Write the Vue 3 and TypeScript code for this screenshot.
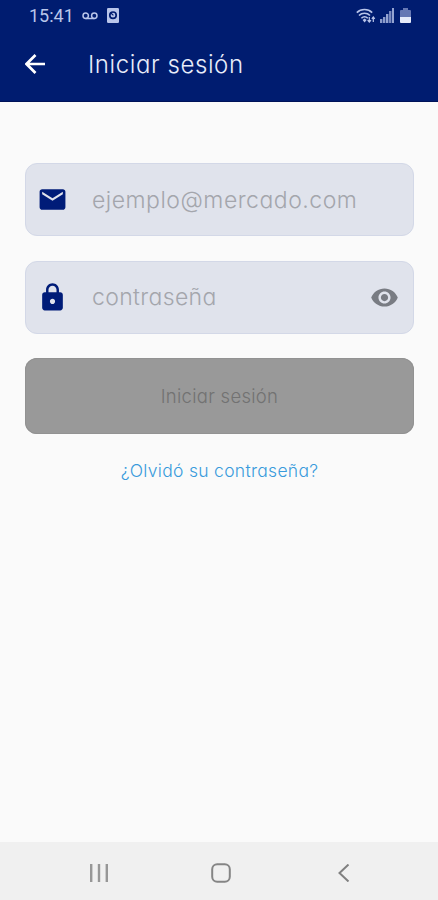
<script setup lang="ts">
import { ref } from 'vue'

const email = ref('')
const password = ref('')
const visible = ref(false)
</script>

<template>
  <div class="screen">
    <header class="top">
      <div class="status">
        <span class="clock">15:41</span>
        <svg class="voicemail" viewBox="0 0 16 8" width="16" height="8">
          <g fill="none" stroke="currentColor" stroke-width="1.5">
            <circle cx="3.7" cy="3.8" r="2.7" />
            <circle cx="12.3" cy="3.8" r="2.7" />
            <path d="M3.7 6.5h8.6" />
          </g>
        </svg>
        <svg class="device" viewBox="0 0 12 15" width="12" height="15">
          <rect width="12" height="15" rx="1.2" fill="currentColor" />
          <circle cx="6" cy="7.2" r="3.2" fill="none" stroke="#001c70" stroke-width="1.7" />
          <path d="M3.600 4.800l2.800 2.600" stroke="#001c70" stroke-width="1.2" fill="none" />
        </svg>
        <span class="spacer"></span>
        <svg class="wifi" viewBox="0 0 20 16" width="20" height="16">
          <g fill="none" stroke="currentColor" stroke-width="1.6">
            <path d="M.8 4.6C5 .5 12 .5 16.200 4.600" />
            <path d="M3 7.500c3-3 8-3 11 0" />
            <path d="M5.400 10.200c2-2 4.400-2 6.400 0" />
          </g>
          <path d="M6.600 12l2-1.500 2 1.500-2 2.500z" fill="currentColor" />
          <path d="M13.300 9v5m-1.700-1.800 1.700 1.900 1.700-1.900M17.300 14V9m-1.500 1.800L17.300 9l1.500 1.800" fill="none" stroke="currentColor" stroke-width="1.200" />
        </svg>
        <svg class="signal" viewBox="0 0 14 15" width="14" height="15">
          <g fill="currentColor">
            <rect x="0" y="11" width="2.400" height="4" opacity=".75" />
            <rect x="3" y="9" width="2.400" height="6" opacity=".75" />
            <rect x="6" y="6" width="2.400" height="9" opacity=".8" />
            <rect x="9" y="3" width="2.400" height="12" opacity=".65" />
            <rect x="12" y="0" width="2" height="15" opacity=".8" />
          </g>
        </svg>
        <svg class="battery" viewBox="0 0 11 15" width="11" height="15">
          <path d="M3 0h5v2h2q1 0 1 1v6H0V3q0-1 1-1h2z" fill="#6678b4" />
          <path d="M0 9h11v5q0 1-1 1H1q-1 0-1-1z" fill="#e6ebfa" />
        </svg>
      </div>
      <div class="bar">
        <button class="back" aria-label="Atrás">
          <svg viewBox="0 0 20 20" width="20" height="20">
            <path d="M20 10H2M10.500 1 1.500 10l9 9" fill="none" stroke="#fff" stroke-width="2.700" />
          </svg>
        </button>
        <h1>Iniciar sesión</h1>
      </div>
    </header>

    <main>
      <label class="field">
        <svg class="lead" viewBox="0 0 24 24" width="31" height="31">
          <path fill="#001c78" d="M20 4H4c-1.100 0-1.990.9-1.990 2L2 18c0 1.100.9 2 2 2h16c1.100 0 2-.9 2-2V6c0-1.100-.9-2-2-2zm0 4l-8 5-8-5V6l8 5 8-5v2z" />
        </svg>
        <input v-model="email" class="email" type="text" placeholder="ejemplo@mercado.com" />
      </label>
      <label class="field">
        <svg class="lead" viewBox="0 0 24 24" width="31" height="31">
          <path fill="#001c78" d="M18 8h-1V6c0-2.760-2.240-5-5-5S7 3.240 7 6v2H6c-1.100 0-2 .9-2 2v10c0 1.100.9 2 2 2h12c1.100 0 2-.9 2-2V10c0-1.100-.9-2-2-2zm-6 9c-1.100 0-2-.9-2-2s.9-2 2-2 2 .9 2 2-.9 2-2 2zm3.100-9H8.900V6c0-1.710 1.390-3.100 3.100-3.100s3.100 1.390 3.100 3.100v2z" />
        </svg>
        <input v-model="password" class="password" :type="visible ? 'text' : 'password'" placeholder="contraseña" />
        <svg class="eye" viewBox="0 0 24 24" width="29" height="29" @click="visible = !visible">
          <path fill="#797c83" d="M12 4.500C7 4.500 2.730 7.610 1 12c1.730 4.390 6 7.500 11 7.500s9.270-3.110 11-7.500c-1.730-4.390-6-7.500-11-7.500zM12 17c-2.760 0-5-2.240-5-5s2.240-5 5-5 5 2.240 5 5-2.240 5-5 5zm0-8c-1.660 0-3 1.340-3 3s1.340 3 3 3 3-1.340 3-3-1.340-3-3-3z" />
        </svg>
      </label>
      <button class="submit"><span>Iniciar sesión</span></button>
      <a class="forgot"><span>¿Olvidó su contraseña?</span></a>
    </main>

    <nav>
      <svg viewBox="0 0 18 18" width="18" height="18">
        <path d="M1.200 0v18M9 0v18M16.800 0v18" stroke="#979797" stroke-width="2.400" />
      </svg>
      <svg class="home" viewBox="0 0 20 20" width="20" height="20">
        <rect x="1.200" y="1.200" width="17.600" height="17.600" rx="5" fill="none" stroke="#858585" stroke-width="2" />
      </svg>
      <svg viewBox="0 0 12 18" width="12" height="18">
        <path d="M10.500.5 1.500 9l9 8.500" fill="none" stroke="#808080" stroke-width="2" />
      </svg>
    </nav>
  </div>
</template>

<style>
body {
  margin: 0;
}
</style>

<style scoped>
.screen {
  width: 100%;
  height: 900px;
  display: flex;
  flex-direction: column;
  background: #fafafa;
  font-family: Inter, "Liberation Sans", sans-serif;
  font-feature-settings: "cv11";
}
svg {
  display: block;
  flex: none;
}
button {
  border: 0;
  padding: 0;
  font: inherit;
  font-feature-settings: inherit;
}
.top {
  box-sizing: border-box;
  height: 102px;
  background: #001c70;
  border-bottom: 1px solid #001258;
}
.status {
  height: 31px;
  display: flex;
  align-items: center;
  padding: 0 27px 0 29px;
  color: #b9c5ea;
}
.clock {
  width: 45px;
  font: 400 18px/31px Roboto, sans-serif;
  white-space: nowrap;
}
.voicemail {
  margin-left: 8px;
}
.device {
  margin-left: 9px;
}
.spacer {
  flex: 1;
}
.signal {
  margin-left: 4px;
}
.battery {
  margin-left: 6px;
}
.bar {
  height: 66px;
  display: flex;
  align-items: center;
  padding-left: 25px;
}
.back {
  background: none;
}
h1 {
  margin: 0 0 0 43px;
  font-size: 24px;
  font-weight: 300;
  letter-spacing: 0.58px;
  color: #e8ecfa;
  white-space: nowrap;
}
main {
  flex: 1;
  display: flex;
  flex-direction: column;
  padding: 61px 24px 0 25px;
}
.field {
  box-sizing: border-box;
  height: 73px;
  margin-bottom: 24.500px;
  display: flex;
  align-items: center;
  padding: 0 14px 0 11px;
  border: 1px solid #d3d8e7;
  border-radius: 12px;
  background: #e0e3ec;
}
input {
  flex: 1;
  min-width: 0;
  margin-left: 24px;
  padding: 0;
  border: 0;
  outline: 0;
  background: none;
  font: 300 23px/30px Inter, "Liberation Sans", sans-serif;
  font-feature-settings: "cv11";
  letter-spacing: 0.5px;
  color: #333;
}
.password {
  letter-spacing: 0.35px;
}
input::placeholder {
  color: #a4a6ac;
  opacity: 1;
}
.submit {
  height: 76px;
  border-radius: 12px;
  background: #999;
  box-shadow: inset 0 0 0 1px #929292;
  color: #727272;
  font-size: 18.5px;
  font-weight: 300;
  letter-spacing: 0.27px;
}
.forgot {
  margin-top: 25px;
  text-align: center;
  font-size: 17.5px;
  line-height: 24px;
  font-weight: 300;
  letter-spacing: 0.3px;
  color: #399bdc;
}
nav {
  height: 58px;
  display: flex;
  align-items: center;
  justify-content: space-between;
  box-sizing: border-box;
  padding: 3px 88px 0 90px;
  background: #f0f0f0;
}
.home {
  margin-right: 4px;
}
</style>
